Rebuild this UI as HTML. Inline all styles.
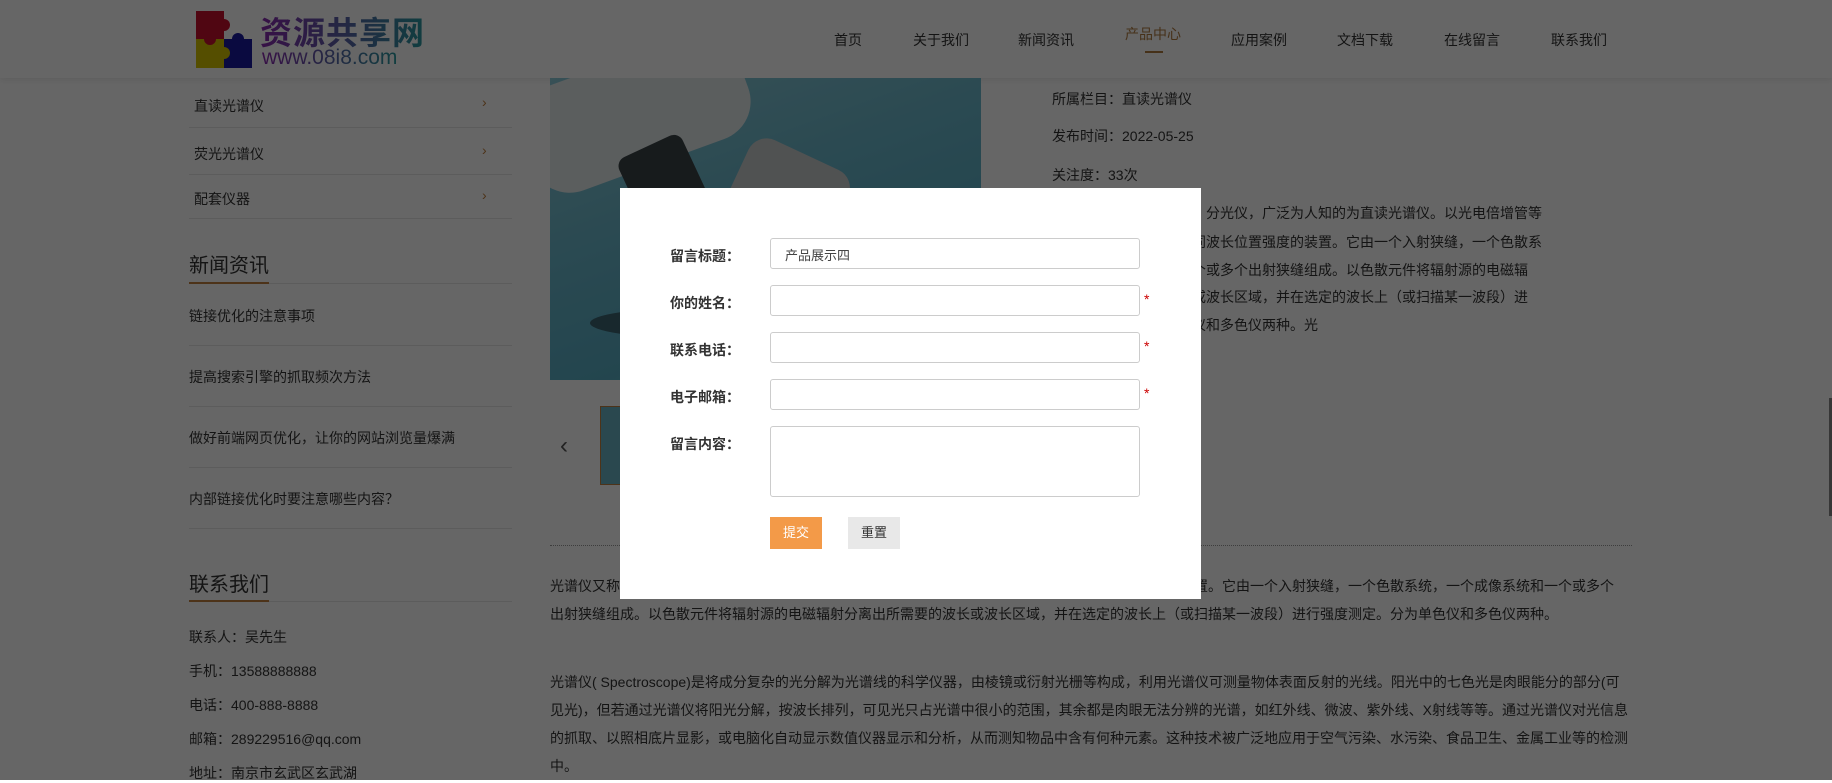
<!DOCTYPE html>
<html><head><meta charset="utf-8">
<style>
*{margin:0;padding:0;box-sizing:border-box}
body{width:1832px;height:780px;overflow:hidden;position:relative;background:#fff;font-family:"Liberation Sans","Noto Sans CJK SC",sans-serif;color:#333;font-size:14px}
.a{position:absolute;white-space:nowrap}
.hdr{position:absolute;left:0;top:0;width:1832px;height:78px;background:#fff;box-shadow:0 2px 6px rgba(0,0,0,.08)}
.nav{font-size:14px;color:#333;top:30px}
.side{font-size:14px;color:#333}
.sep{position:absolute;height:1px;background:#e6e6e6}
.h2{font-size:20px;color:#333}
.p{font-size:14px;color:#333}
.ov{position:absolute;left:0;top:0;width:1832px;height:780px;background:rgba(0,0,0,.6)}
.modal{position:absolute;left:620px;top:188px;width:581px;height:411px;background:#fff}
.lb{position:absolute;left:50px;font-size:14px;font-weight:bold;color:#333}
.in{position:absolute;left:150px;width:370px;height:31px;border:1px solid #ccc;border-radius:3px;background:#fff}
.st{position:absolute;left:524px;color:#c00;font-size:14px}
.grad{background:linear-gradient(90deg,#8a2ab0,#2a9aa0);-webkit-background-clip:text;background-clip:text;color:transparent}
</style></head><body>
<div class="hdr"></div>
<svg class="a" style="left:196px;top:11px" width="56" height="57" viewBox="0 0 56 57">
<rect x="0" y="0" width="28" height="28" fill="#c8102e"/><rect x="28" y="0" width="28" height="28" fill="#fff"/>
<rect x="0" y="28" width="28" height="29" fill="#d4c400"/><rect x="28" y="28" width="28" height="29" fill="#1a1aa0"/>
<circle cx="28" cy="14" r="6" fill="#c8102e"/><circle cx="14" cy="28" r="6" fill="#c8102e"/><circle cx="42" cy="28" r="6" fill="#1a1aa0"/><circle cx="28" cy="42" r="6" fill="#d4c400"/></svg>
<div class="a grad" style="left:260px;top:8px;font-size:32px;font-weight:bold;letter-spacing:1px">资源共享网</div>
<div class="a grad" style="left:262px;top:46px;font-size:21px">www.08i8.com</div>
<div class="a nav" style="left:834px">首页</div>
<div class="a nav" style="left:913px">关于我们</div>
<div class="a nav" style="left:1018px">新闻资讯</div>
<div class="a nav" style="left:1125px;top:24px;color:#b07a40">产品中心</div>
<div class="a" style="left:1145px;top:51px;width:18px;height:2px;background:#b07a40"></div>
<div class="a nav" style="left:1231px">应用案例</div>
<div class="a nav" style="left:1337px">文档下载</div>
<div class="a nav" style="left:1444px">在线留言</div>
<div class="a nav" style="left:1551px">联系我们</div>

<div class="a side" style="left:194px;top:96px">直读光谱仪</div><div class="a" style="left:482px;top:94px;color:#c08040">›</div>
<div class="sep" style="left:189px;top:127px;width:323px"></div>
<div class="a side" style="left:194px;top:144px">荧光光谱仪</div><div class="a" style="left:482px;top:142px;color:#c08040">›</div>
<div class="sep" style="left:189px;top:174px;width:323px"></div>
<div class="a side" style="left:194px;top:189px">配套仪器</div><div class="a" style="left:482px;top:187px;color:#c08040">›</div>
<div class="sep" style="left:189px;top:218px;width:323px"></div>
<div class="a h2" style="left:189px;top:249px">新闻资讯</div>
<div class="sep" style="left:189px;top:283px;width:323px"></div>
<div class="a" style="left:189px;top:282px;width:80px;height:2px;background:#c08040"></div>
<div class="a side" style="left:189px;top:306px">链接优化的注意事项</div>
<div class="sep" style="left:189px;top:345px;width:323px"></div>
<div class="a side" style="left:189px;top:367px">提高搜索引擎的抓取频次方法</div>
<div class="sep" style="left:189px;top:406px;width:323px"></div>
<div class="a side" style="left:189px;top:428px">做好前端网页优化，让你的网站浏览量爆满</div>
<div class="sep" style="left:189px;top:467px;width:323px"></div>
<div class="a side" style="left:189px;top:489px">内部链接优化时要注意哪些内容？</div>
<div class="sep" style="left:189px;top:528px;width:323px"></div>
<div class="a h2" style="left:189px;top:568px">联系我们</div>
<div class="sep" style="left:189px;top:601px;width:323px"></div>
<div class="a" style="left:189px;top:600px;width:80px;height:2px;background:#c08040"></div>
<div class="a side" style="left:189px;top:627px">联系人：吴先生</div>
<div class="a side" style="left:189px;top:661px">手机：13588888888</div>
<div class="a side" style="left:189px;top:695px">电话：400-888-8888</div>
<div class="a side" style="left:189px;top:729px">邮箱：289229516@qq.com</div>
<div class="a side" style="left:189px;top:763px">地址：南京市玄武区玄武湖</div>

<div class="a" style="left:550px;top:78px;width:431px;height:302px;background:linear-gradient(160deg,#8ccad8 0%,#6ab8cc 40%,#58adc4 70%,#7cc0d2 100%);overflow:hidden">
<div style="position:absolute;left:-30px;top:-20px;width:230px;height:110px;background:#e4eaec;border-radius:40px;transform:rotate(-20deg)"></div>
<div style="position:absolute;left:100px;top:60px;width:70px;height:180px;background:#3a4448;border-radius:10px;transform:rotate(-25deg)"></div>
<div style="position:absolute;left:170px;top:70px;width:110px;height:150px;background:#c8ccce;border-radius:20px;transform:rotate(25deg)"></div>
<div style="position:absolute;left:40px;top:230px;width:200px;height:30px;background:#3e6470;border-radius:50%"></div>
</div>
<div class="a" style="left:560px;top:432px;font-size:24px;color:#555">‹</div>
<div class="a" style="left:600px;top:406px;width:60px;height:79px;border:1px solid #c08040;background:#6ab4c6"></div>

<div class="a p" style="left:1052px;top:89px">所属栏目：直读光谱仪</div>
<div class="a p" style="left:1052px;top:126px">发布时间：2022-05-25</div>
<div class="a p" style="left:1052px;top:165px">关注度：33次</div>
<div class="a p" style="left:1052px;top:203px">光谱仪又称光谱分析仪、分光仪，广泛为人知的为直读光谱仪。以光电倍增管等</div>
<div class="a p" style="left:1052px;top:232px">探测器测量谱线中的不同波长位置强度的装置。它由一个入射狭缝，一个色散系</div>
<div class="a p" style="left:1052px;top:260px">统，一个成像系统和一个或多个出射狭缝组成。以色散元件将辐射源的电磁辐</div>
<div class="a p" style="left:1052px;top:287px">射分离出所需要的波长或波长区域，并在选定的波长上（或扫描某一波段）进</div>
<div class="a p" style="left:1052px;top:315px">行强度测定。分为单色仪和多色仪两种。光</div>

<div class="a" style="left:550px;top:545px;width:1082px;height:0;border-top:1px dotted #999"></div>
<div class="a p" style="left:550px;top:576px">光谱仪又称分光仪，广泛为人知的为直读光谱仪。以光电倍增管等探测器测量谱线不同波长位置强度的装置。它由一个入射狭缝，一个色散系统，一个成像系统和一个或多个</div>
<div class="a p" style="left:550px;top:604px">出射狭缝组成。以色散元件将辐射源的电磁辐射分离出所需要的波长或波长区域，并在选定的波长上（或扫描某一波段）进行强度测定。分为单色仪和多色仪两种。</div>
<div class="a p" style="left:550px;top:672px">光谱仪( Spectroscope)是将成分复杂的光分解为光谱线的科学仪器，由棱镜或衍射光栅等构成，利用光谱仪可测量物体表面反射的光线。阳光中的七色光是肉眼能分的部分(可</div>
<div class="a p" style="left:550px;top:700px">见光)，但若通过光谱仪将阳光分解，按波长排列，可见光只占光谱中很小的范围，其余都是肉眼无法分辨的光谱，如红外线、微波、紫外线、X射线等等。通过光谱仪对光信息</div>
<div class="a p" style="left:550px;top:728px">的抓取、以照相底片显影，或电脑化自动显示数值仪器显示和分析，从而测知物品中含有何种元素。这种技术被广泛地应用于空气污染、水污染、食品卫生、金属工业等的检测</div>
<div class="a p" style="left:550px;top:756px">中。</div>
<div class="a" style="left:1829px;top:398px;width:3px;height:118px;background:#888"></div>

<div class="ov"></div>
<div class="modal">
<div class="lb" style="top:58px">留言标题：</div>
<div class="in" style="top:50px"><span style="position:absolute;left:14px;top:6px;font-size:13px;color:#444">产品展示四</span></div>
<div class="lb" style="top:105px">你的姓名：</div>
<div class="in" style="top:97px"></div><div class="st" style="top:103px">*</div>
<div class="lb" style="top:152px">联系电话：</div>
<div class="in" style="top:144px"></div><div class="st" style="top:150px">*</div>
<div class="lb" style="top:199px">电子邮箱：</div>
<div class="in" style="top:191px"></div><div class="st" style="top:197px">*</div>
<div class="lb" style="top:246px">留言内容：</div>
<div class="in" style="top:238px;height:71px"></div>
<div class="a" style="left:150px;top:329px;width:52px;height:32px;background:#f39a48;color:#fff;font-size:13px;text-align:center;line-height:32px">提交</div>
<div class="a" style="left:228px;top:329px;width:52px;height:32px;background:#e8e8e8;color:#333;font-size:13px;text-align:center;line-height:32px">重置</div>
</div>
</body></html>
